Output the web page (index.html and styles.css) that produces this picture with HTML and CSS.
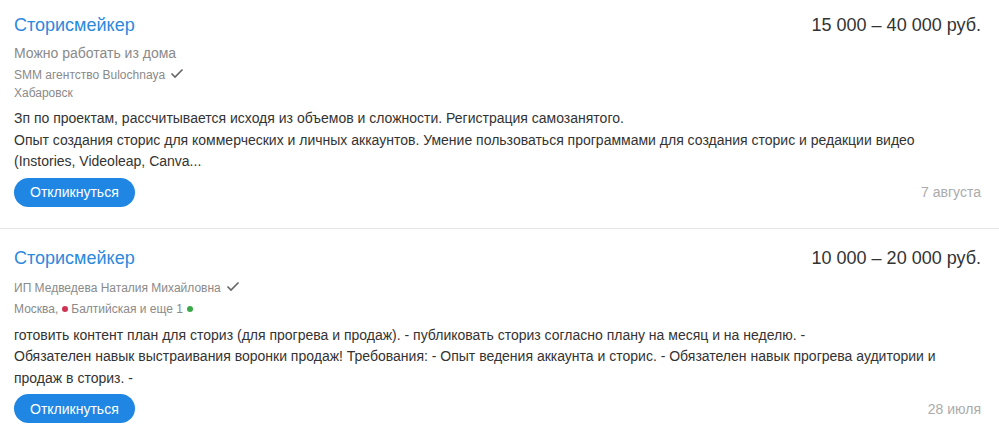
FILE: index.html
```html
<!DOCTYPE html>
<html lang="ru">
<head>
<meta charset="utf-8">
<title>Вакансии</title>
<link rel="stylesheet" href="styles.css">
</head>
<body>
<div class="list">
  <div class="vacancy">
    <div class="head">
      <a class="title" href="#">Сторисмейкер</a>
      <div class="salary">15 000 – 40 000 руб.</div>
    </div>
    <div class="remote">Можно работать из дома</div>
    <div class="company">SMM агентство Bulochnaya
      <svg class="check" width="14" height="11" viewBox="0 0 14 11"><path d="M1.5 5.5 L5 9 L12.5 1.5" fill="none" stroke="#666" stroke-width="1.6"/></svg>
    </div>
    <div class="location">Хабаровск</div>
    <div class="desc">
      <div>Зп по проектам, рассчитывается исходя из объемов и сложности. Регистрация самозанятого.</div>
      <div>Опыт создания сторис для коммерческих и личных аккаунтов. Умение пользоваться программами для создания сторис и редакции видео (Instories, Videoleap, Canva...</div>
    </div>
    <div class="foot">
      <button class="respond">Откликнуться</button>
      <span class="date">7 августа</span>
    </div>
  </div>
  <div class="vacancy">
    <div class="head">
      <a class="title" href="#">Сторисмейкер</a>
      <div class="salary">10 000 – 20 000 руб.</div>
    </div>
    <div class="company">ИП Медведева Наталия Михайловна
      <svg class="check" width="14" height="11" viewBox="0 0 14 11"><path d="M1.5 5.5 L5 9 L12.5 1.5" fill="none" stroke="#666" stroke-width="1.6"/></svg>
    </div>
    <div class="location metro">Москва, <span class="dot dot-red"></span>Балтийская и еще 1 <span class="dot dot-green"></span></div>
    <div class="desc">
      <div>готовить контент план для сториз (для прогрева и продаж). - публиковать сториз согласно плану на месяц и на неделю. -</div>
      <div>Обязателен навык выстраивания воронки продаж! Требования: - Опыт ведения аккаунта и сторис. - Обязателен навык прогрева аудитории и продаж в сториз. -</div>
    </div>
    <div class="foot">
      <button class="respond">Откликнуться</button>
      <span class="date">28 июля</span>
    </div>
  </div>
</div>
</body>
</html>
```
FILE: styles.css
```css
* { box-sizing: border-box; }
html, body {
  margin: 0;
  padding: 0;
  background: #fff;
}
body {
  font-family: "Liberation Sans", Arial, sans-serif;
  color: #333;
}
.vacancy {
  padding: 18px 18px 21px 14px;
  border-bottom: 1px solid #e6e6e6;
}
.vacancy:first-child {
  padding-top: 14px;
}
.vacancy:last-child {
  padding-bottom: 24px;
}
.head {
  display: flex;
  justify-content: space-between;
  align-items: flex-start;
}
.title {
  font-size: 18px;
  line-height: 22px;
  color: #2b89de;
  text-decoration: none;
}
.salary {
  font-size: 18px;
  line-height: 22px;
  color: #333;
}
.remote {
  margin-top: 7px;
  font-size: 14px;
  line-height: 20px;
  color: #8a8a8a;
}
.company {
  margin-top: 10px;
  font-size: 12px;
  line-height: 18px;
  color: #8a8a8a;
  display: flex;
  align-items: center;
}
.remote + .company {
  margin-top: 3px;
}
.check {
  margin-left: 5px;
  margin-top: -3px;
}
.location {
  font-size: 12px;
  line-height: 18px;
  color: #8a8a8a;
}
.location.metro {
  margin-top: 3px;
  display: flex;
  align-items: center;
}
.dot {
  display: inline-block;
  width: 6px;
  height: 6px;
  border-radius: 50%;
  margin: 0 3px 0 4px;
}
.dot-red { background: #cf3454; }
.dot-green { background: #3aaa48; margin-left: 4px; }
.desc {
  margin-top: 6px;
  max-width: 940px;
  font-size: 14px;
  line-height: 21.5px;
  color: #333;
}
.metro + .desc {
  margin-top: 7px;
}
.foot {
  margin-top: 5px;
  display: flex;
  justify-content: space-between;
  align-items: center;
}
.respond {
  height: 29px;
  padding: 0 16px;
  border: none;
  border-radius: 15px;
  background: #1f87e3;
  color: #fff;
  font-family: "Liberation Sans", Arial, sans-serif;
  font-size: 14px;
  cursor: pointer;
}
.date {
  font-size: 14px;
  color: #ababab;
}
```
